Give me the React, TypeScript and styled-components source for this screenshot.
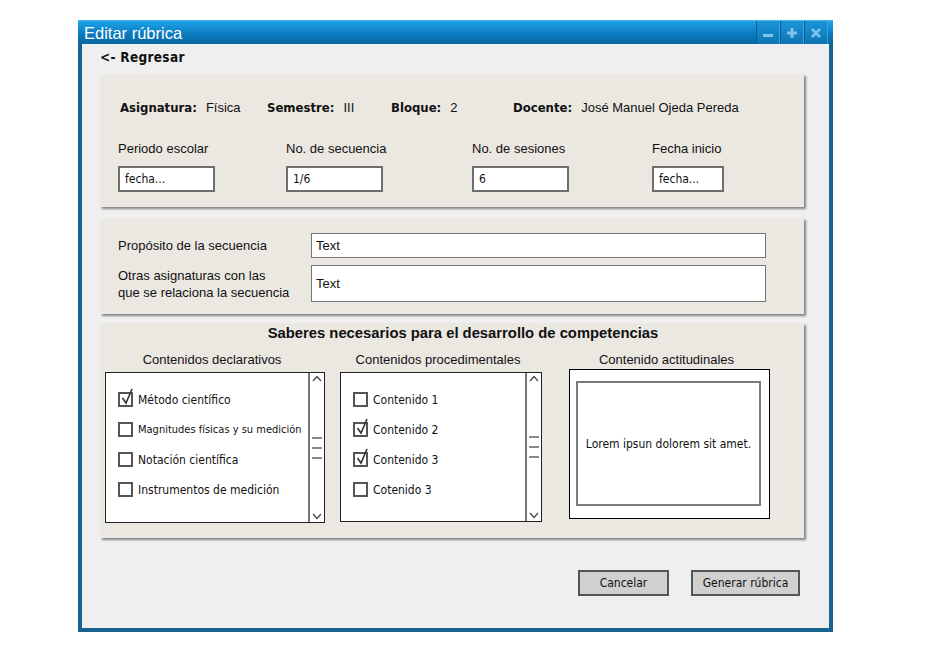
import React from "react";
import styled, { createGlobalStyle } from "styled-components";

const HAND = `"Comic Sans MS", "DejaVu Sans Condensed", "DejaVu Sans", sans-serif`;
const SANS = `"Liberation Sans", Arial, sans-serif`;

const Global = createGlobalStyle`
  html, body { margin: 0; padding: 0; background: #ffffff; }
  body { font-family: ${SANS}; }
  * { box-sizing: border-box; }
`;

const Page = styled.div`
  padding: 20px 0 0 78px;
  width: 950px;
  height: 650px;
`;

const Window = styled.div`
  width: 755px;
  height: 612px;
  border: 4px solid #17658f;
  border-top: none;
  background: #efefef;
  display: flex;
  flex-direction: column;
`;

const TitleBar = styled.div`
  height: 24px;
  margin: 0 -4px;
  background: linear-gradient(#1ea3e8, #0b78bd 60%, #0a68a4);
  display: flex;
  align-items: center;
  padding-left: 6px;
  border-top: 1px solid #4db8ee;
`;

const Title = styled.div`
  color: #ffffff;
  font-family: ${SANS};
  font-size: 16.5px;
  flex: 1;
  line-height: 22px;
`;

const WinButtons = styled.div`
  display: flex;
  height: 23px;
  margin-right: 5px;
  align-self: flex-start;
`;

const WinBtn = styled.div`
  width: 24px;
  height: 23px;
  border-left: 1px solid #0a5d92;
  border-right: 1px solid #3aa3dc;
  background: linear-gradient(#1a95d8, #0e74b4);
  display: flex;
  align-items: center;
  justify-content: center;
`;

const Content = styled.div`
  flex: 1;
  padding: 4px 25px 0 18px;
  display: flex;
  flex-direction: column;
`;

const Back = styled.div`
  font-family: ${HAND};
  font-weight: bold;
  font-size: 13.5px;
  color: #111;
  height: 26px;
  line-height: 16px;
  padding-top: 1px;
  letter-spacing: 0.3px;
`;

const Panel = styled.div<{ $h: number; $mt: number }>`
  background: #ebe8e2;
  height: ${(p) => p.$h}px;
  margin-top: ${(p) => p.$mt}px;
  box-shadow: 2px 2px 2px rgba(0, 0, 0, 0.45);
`;

const InfoRow = styled.div`
  display: flex;
  align-items: center;
  padding: 25px 0 0 20px;
  height: 42px;
`;

const InfoItem = styled.div<{ $w?: number }>`
  display: flex;
  align-items: baseline;
  gap: 9px;
  width: ${(p) => (p.$w ? `${p.$w}px` : "auto")};
`;

const InfoLabel = styled.span`
  font-family: ${HAND};
  font-weight: bold;
  font-size: 13px;
  color: #111;
`;

const InfoValue = styled.span`
  font-family: ${SANS};
  font-size: 13px;
  color: #111;
`;

const FieldsRow = styled.div`
  display: flex;
  padding: 25px 0 0 18px;
`;

const FieldCol = styled.div<{ $w?: number }>`
  width: ${(p) => (p.$w ? `${p.$w}px` : "auto")};
  display: flex;
  flex-direction: column;
`;

const FieldLabel = styled.div`
  font-family: ${SANS};
  font-size: 13px;
  color: #111;
  height: 16px;
  line-height: 16px;
  margin-bottom: 9px;
`;

const SmallInput = styled.div<{ $w: number }>`
  width: ${(p) => p.$w}px;
  height: 26px;
  background: #fff;
  border: 2px solid #6e6e6e;
  font-family: ${HAND};
  font-size: 12px;
  color: #111;
  padding: 0 5px;
  display: flex;
  align-items: center;
`;

const FormGrid = styled.div`
  display: grid;
  grid-template-columns: 193px 455px;
  row-gap: 7px;
  padding: 15px 0 0 18px;
`;

const FormLabel = styled.div`
  font-family: ${SANS};
  font-size: 13px;
  color: #111;
  line-height: 17px;
  display: flex;
  align-items: center;
`;

const TextInput = styled.div<{ $h: number }>`
  height: ${(p) => p.$h}px;
  background: #fff;
  border: 1.5px solid #777;
  font-family: ${SANS};
  font-size: 13px;
  color: #111;
  padding: 0 4px;
  display: flex;
  align-items: center;
`;

const SectionTitle = styled.div`
  font-family: ${SANS};
  font-weight: bold;
  font-size: 14.8px;
  color: #111;
  text-align: center;
  padding: 2px 0 0 22px;
  height: 22px;
`;

const Columns = styled.div`
  display: flex;
  padding-left: 5px;
  align-items: flex-start;
`;

const Column = styled.div<{ $w: number; $mr: number }>`
  width: ${(p) => p.$w}px;
  margin-right: ${(p) => p.$mr}px;
  display: flex;
  flex-direction: column;
`;

const ColHeader = styled.div`
  font-family: ${SANS};
  font-size: 13px;
  color: #111;
  text-align: center;
  height: 27px;
  line-height: 17px;
  padding: 6px 6px 0 0;
`;

const ListBox = styled.div<{ $h: number }>`
  height: ${(p) => p.$h}px;
  background: #fff;
  border: 1.5px solid #222;
  display: flex;
`;

const ListItems = styled.div`
  flex: 1;
  padding: 17px 0 0 12px;
  display: flex;
  flex-direction: column;
  gap: 11px;
`;

const Item = styled.div`
  display: flex;
  align-items: center;
  height: 19px;
  gap: 5px;
`;

const Check = styled.div`
  position: relative;
  width: 15px;
  height: 15px;
  border: 2px solid #555;
  flex: none;
`;

const CheckMark = styled.svg`
  position: absolute;
  left: 1px;
  top: -6px;
`;

const ItemText = styled.span<{ $small?: boolean }>`
  font-family: ${HAND};
  font-size: ${(p) => (p.$small ? "11px" : "12px")};
  color: #111;
  white-space: nowrap;
`;

const ScrollBar = styled.div`
  width: 16px;
  border-left: 2px solid #777;
  display: flex;
  flex-direction: column;
  justify-content: space-between;
  align-items: center;
  padding: 2px 0;
`;

const Thumb = styled.div`
  display: flex;
  flex-direction: column;
  gap: 8px;
  width: 100%;
  align-items: center;
`;

const ThumbLine = styled.div`
  width: 10px;
  height: 2px;
  background: #888;
`;

const TextBoxOuter = styled.div`
  height: 150px;
  background: #fff;
  border: 1.5px solid #000;
  padding: 11px 8px 12px 6px;
  margin-top: -3px;
`;

const TextBoxInner = styled.div`
  height: 100%;
  border: 2px solid #7a7a7a;
  display: flex;
  align-items: center;
  justify-content: center;
  font-family: ${HAND};
  font-size: 12px;
  color: #111;
`;

const Footer = styled.div`
  display: flex;
  justify-content: flex-end;
  gap: 22px;
  padding: 32px 4px 0 0;
`;

const Button = styled.div<{ $w: number }>`
  width: ${(p) => p.$w}px;
  height: 26px;
  background: #d0d0d0;
  border: 2px solid #555;
  display: flex;
  align-items: center;
  justify-content: center;
  font-family: ${HAND};
  font-size: 12px;
  color: #111;
`;

const Arrow = ({ up }: { up?: boolean }) => (
  <svg width="10" height="7" viewBox="0 0 10 7">
    <path
      d={up ? "M1 6 L5 1.5 L9 6" : "M1 1 L5 5.5 L9 1"}
      fill="none"
      stroke="#444"
      strokeWidth="1.2"
    />
  </svg>
);

const CheckBox = ({ checked }: { checked?: boolean }) => (
  <Check>
    {checked && (
      <CheckMark width="14" height="18" viewBox="0 0 14 18">
        <path d="M1.5 10 L5 15 L11 1" fill="none" stroke="#333" strokeWidth="1.6" />
      </CheckMark>
    )}
  </Check>
);

const Scroll = () => (
  <ScrollBar>
    <Arrow up />
    <Thumb>
      <ThumbLine />
      <ThumbLine />
      <ThumbLine />
    </Thumb>
    <Arrow />
  </ScrollBar>
);

const declarativos = [
  { t: "Método científico", c: true },
  { t: "Magnitudes físicas y su medición", c: false, s: true },
  { t: "Notación científica", c: false },
  { t: "Instrumentos de medición", c: false },
];

const procedimentales = [
  { t: "Contenido 1", c: false },
  { t: "Contenido 2", c: true },
  { t: "Contenido 3", c: true },
  { t: "Cotenido 3", c: false },
];

export default function App() {
  return (
    <Page>
      <Global />
      <Window>
        <TitleBar>
          <Title>Editar rúbrica</Title>
          <WinButtons>
            <WinBtn>
              <svg width="10" height="10" viewBox="0 0 10 10">
                <rect x="0" y="6" width="10" height="3" fill="#7cc2ec" />
              </svg>
            </WinBtn>
            <WinBtn>
              <svg width="10" height="10" viewBox="0 0 10 10">
                <rect x="0" y="3.5" width="10" height="3" fill="#7cc2ec" />
                <rect x="3.5" y="0" width="3" height="10" fill="#7cc2ec" />
              </svg>
            </WinBtn>
            <WinBtn>
              <svg width="10" height="10" viewBox="0 0 10 10">
                <path d="M1 1 L9 9 M9 1 L1 9" stroke="#7cc2ec" strokeWidth="2.6" />
              </svg>
            </WinBtn>
          </WinButtons>
        </TitleBar>
        <Content>
          <Back>&lt;- Regresar</Back>
          <Panel $h={133} $mt={0}>
            <InfoRow>
              <InfoItem $w={147}>
                <InfoLabel>Asignatura:</InfoLabel>
                <InfoValue>Física</InfoValue>
              </InfoItem>
              <InfoItem $w={124}>
                <InfoLabel>Semestre:</InfoLabel>
                <InfoValue>III</InfoValue>
              </InfoItem>
              <InfoItem $w={122}>
                <InfoLabel>Bloque:</InfoLabel>
                <InfoValue>2</InfoValue>
              </InfoItem>
              <InfoItem>
                <InfoLabel>Docente:</InfoLabel>
                <InfoValue>José Manuel Ojeda Pereda</InfoValue>
              </InfoItem>
            </InfoRow>
            <FieldsRow>
              <FieldCol $w={168}>
                <FieldLabel>Periodo escolar</FieldLabel>
                <SmallInput $w={97}>fecha...</SmallInput>
              </FieldCol>
              <FieldCol $w={186}>
                <FieldLabel>No. de secuencia</FieldLabel>
                <SmallInput $w={97}>1/6</SmallInput>
              </FieldCol>
              <FieldCol $w={180}>
                <FieldLabel>No. de sesiones</FieldLabel>
                <SmallInput $w={97}>6</SmallInput>
              </FieldCol>
              <FieldCol>
                <FieldLabel>Fecha inicio</FieldLabel>
                <SmallInput $w={72}>fecha...</SmallInput>
              </FieldCol>
            </FieldsRow>
          </Panel>
          <Panel $h={96} $mt={11}>
            <FormGrid>
              <FormLabel>Propósito de la secuencia</FormLabel>
              <TextInput $h={25}>Text</TextInput>
              <FormLabel>
                Otras asignaturas con las
                <br />
                que se relaciona la secuencia
              </FormLabel>
              <TextInput $h={37}>Text</TextInput>
            </FormGrid>
          </Panel>
          <Panel $h={215} $mt={9}>
            <SectionTitle>Saberes necesarios para el desarrollo de competencias</SectionTitle>
            <Columns>
              <Column $w={220} $mr={15}>
                <ColHeader>Contenidos declarativos</ColHeader>
                <ListBox $h={151}>
                  <ListItems>
                    {declarativos.map((d) => (
                      <Item key={d.t}>
                        <CheckBox checked={d.c} />
                        <ItemText $small={d.s}>{d.t}</ItemText>
                      </Item>
                    ))}
                  </ListItems>
                  <Scroll />
                </ListBox>
              </Column>
              <Column $w={202} $mr={27}>
                <ColHeader>Contenidos procedimentales</ColHeader>
                <ListBox $h={150}>
                  <ListItems>
                    {procedimentales.map((d) => (
                      <Item key={d.t}>
                        <CheckBox checked={d.c} />
                        <ItemText>{d.t}</ItemText>
                      </Item>
                    ))}
                  </ListItems>
                  <Scroll />
                </ListBox>
              </Column>
              <Column $w={201} $mr={0}>
                <ColHeader>Contenido actitudinales</ColHeader>
                <TextBoxOuter>
                  <TextBoxInner>Lorem ipsun dolorem sit amet.</TextBoxInner>
                </TextBoxOuter>
              </Column>
            </Columns>
          </Panel>
          <Footer>
            <Button $w={91}>Cancelar</Button>
            <Button $w={109}>Generar rúbrica</Button>
          </Footer>
        </Content>
      </Window>
    </Page>
  );
}
